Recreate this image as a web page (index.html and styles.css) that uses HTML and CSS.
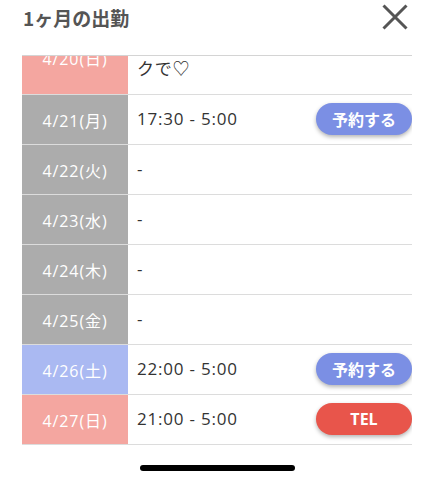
FILE: index.html
```html
<!DOCTYPE html>
<html lang="ja">
<head>
  <meta charset="UTF-8" />
  <meta name="viewport" content="width=device-width, initial-scale=1.0" />
  <title>1ヶ月の出勤</title>
  <link rel="stylesheet" href="styles.css">
</head>
<body>
  <div class="modal">
    <div class="modal-head">
      <h2>1ヶ月の出勤</h2>
      <button class="close" aria-label="閉じる">
        <svg width="26" height="26" viewBox="0 0 26 26">
          <path d="M1.5 1.5 L24.5 24.5 M24.5 1.5 L1.5 24.5" stroke="#555" stroke-width="3" fill="none" />
        </svg>
      </button>
    </div>

    <div class="schedule">
      <ul class="days">
        <li class="day">
          <div class="date sun">4/20(日)</div>
          <div class="shift">お得な情報はブログをチェッ<br>クで♡</div>
        </li>
        <li class="day">
          <div class="date">4/21(月)</div>
          <div class="shift">17:30 - 5:00 <button class="btn reserve">予約する</button></div>
        </li>
        <li class="day">
          <div class="date">4/22(火)</div>
          <div class="shift">-</div>
        </li>
        <li class="day">
          <div class="date">4/23(水)</div>
          <div class="shift">-</div>
        </li>
        <li class="day">
          <div class="date">4/24(木)</div>
          <div class="shift">-</div>
        </li>
        <li class="day">
          <div class="date">4/25(金)</div>
          <div class="shift">-</div>
        </li>
        <li class="day">
          <div class="date sat">4/26(土)</div>
          <div class="shift">22:00 - 5:00 <button class="btn reserve">予約する</button></div>
        </li>
        <li class="day">
          <div class="date sun">4/27(日)</div>
          <div class="shift">21:00 - 5:00 <button class="btn tel">TEL</button></div>
        </li>
      </ul>
    </div>

    <div class="home-bar"></div>
  </div>
</body>
</html>
```

FILE: styles.css
```css
body {
  margin: 0;
  padding: 0;
  background: #fff;
  font-family: "Noto Sans CJK JP", "Noto Sans", sans-serif;
  color: #333;
}

.modal {
  width: 435px;
  height: 480px;
  overflow: hidden;
}

.modal-head {
  height: 55px;
  display: flex;
  justify-content: space-between;
  align-items: flex-start;
  padding: 0 27px 0 23px;
  box-sizing: border-box;
}

.modal-head h2 {
  margin: 0;
  font-size: 19px;
  line-height: 36px;
  font-weight: bold;
  color: #555;
}

.close {
  margin-top: 4px;
  padding: 0;
  border: none;
  background: none;
  width: 26px;
  height: 26px;
  cursor: pointer;
}

.schedule {
  margin: 0 23px 0 22px;
  height: 391px;
  border-top: 1px solid #d4d4d4;
  box-sizing: border-box;
  overflow: hidden;
  font-family: "Open Sans", "Noto Sans CJK JP", sans-serif;
}

.days {
  list-style: none;
  margin: -35px 0 0;
  padding: 0;
}

.day {
  display: flex;
  border-bottom: 1px solid #dcdcdc;
}

.date {
  width: 106px;
  flex-shrink: 0;
  display: flex;
  align-items: center;
  justify-content: center;
  background: #acacac;
  color: #fff;
  font-size: 16px;
  letter-spacing: 0.9px;
}

.date.sun {
  background: #f4a6a0;
}

.date.sat {
  background: #aab9f2;
}

.shift {
  flex: 1;
  display: flex;
  align-items: center;
  justify-content: space-between;
  padding: 12px 0 13px 9px;
  line-height: 24px;
  font-size: 17px;
  letter-spacing: 0.8px;
  color: #333;
}

.day:first-child .shift {
  display: block;
}

.btn {
  width: 96px;
  height: 32px;
  margin: -4px 0;
  border: none;
  border-radius: 16px;
  color: #fff;
  font-family: "Noto Sans CJK JP", sans-serif;
  font-size: 16px;
  font-weight: bold;
  letter-spacing: 0;
  box-shadow: 0 2px 4px rgba(0, 0, 0, 0.3);
  cursor: pointer;
}

.btn.reserve {
  background: #7b8fe4;
}

.btn.tel {
  background: #e8554b;
  font-family: "Open Sans", sans-serif;
}

.home-bar {
  width: 155px;
  height: 6px;
  margin: 19px auto 0;
  background: #000;
  border-radius: 3px;
}
```
